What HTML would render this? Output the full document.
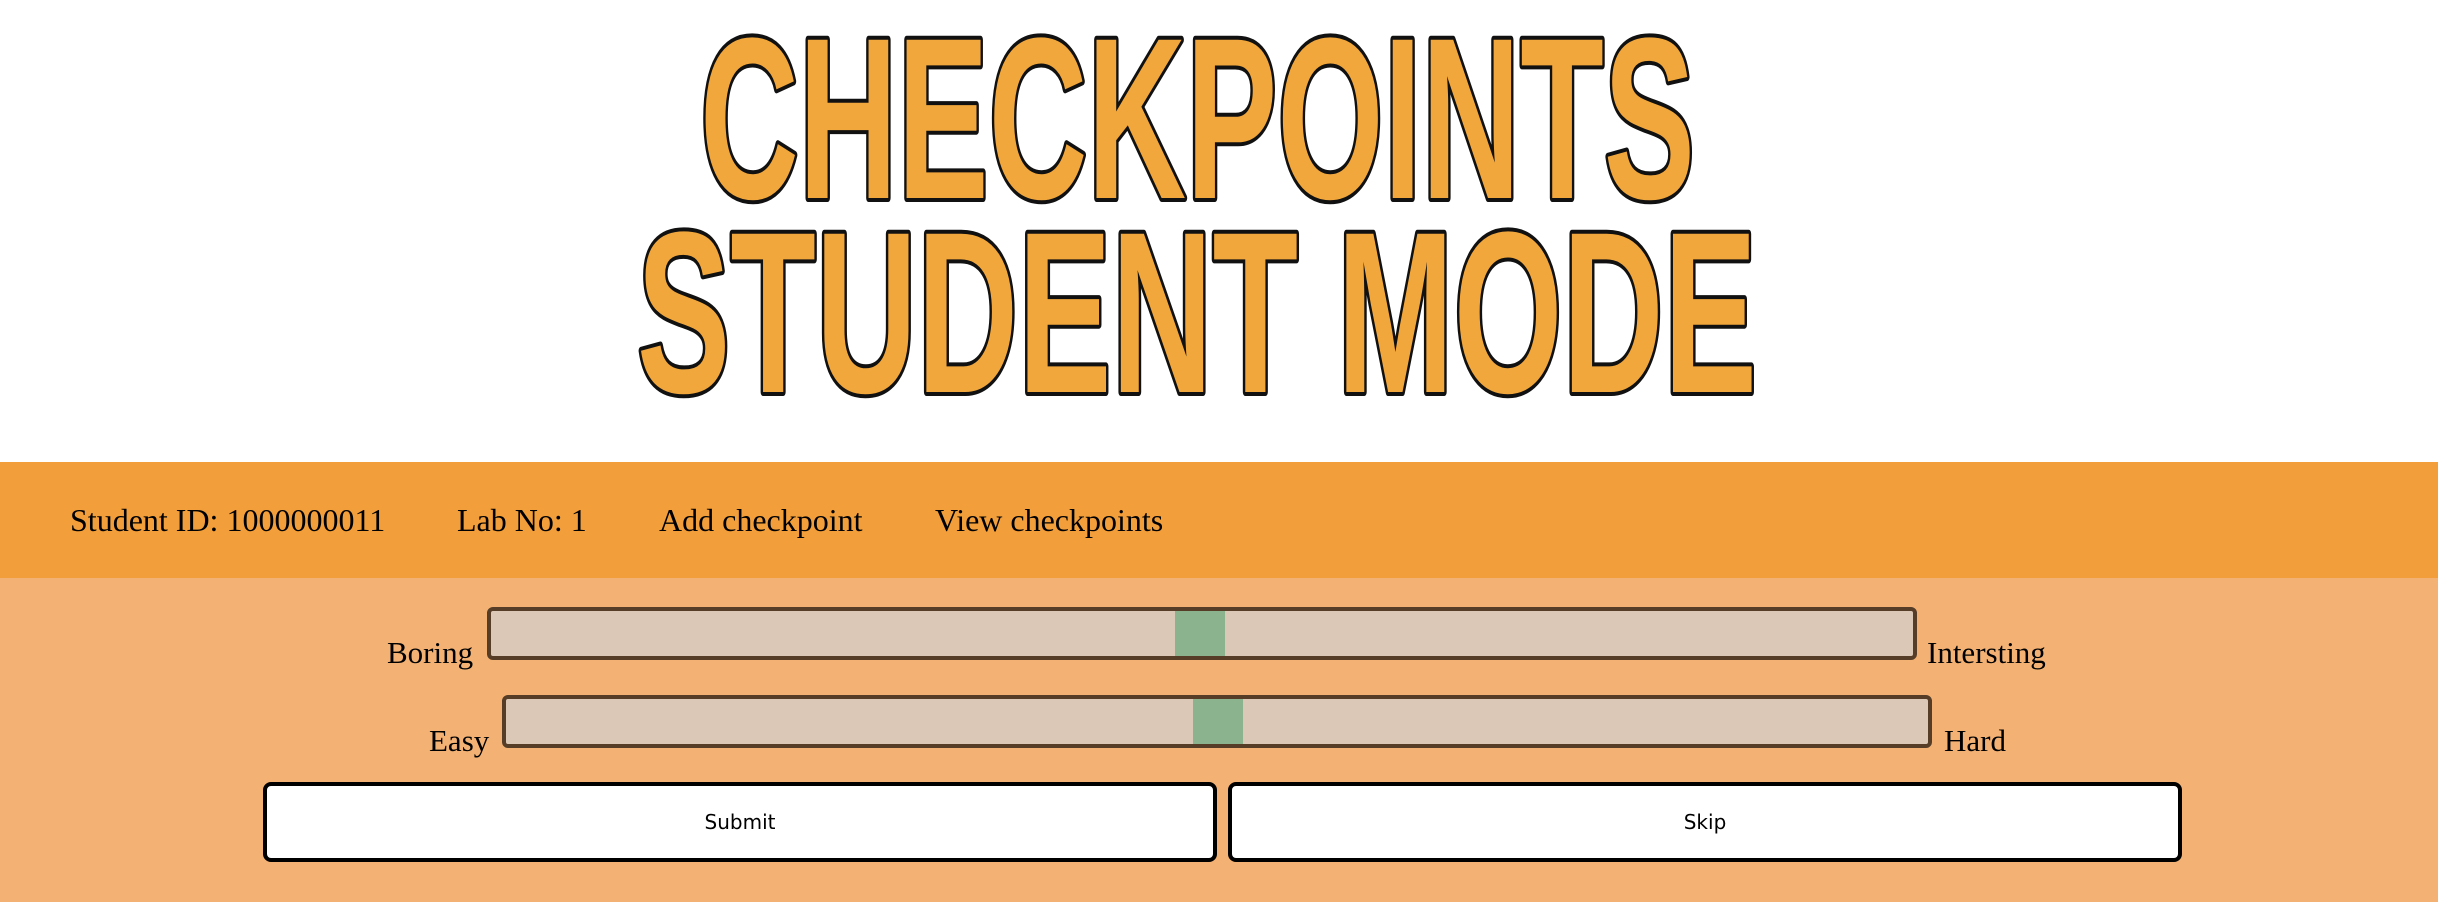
<!DOCTYPE html>
<html><head><meta charset="utf-8"><style>
*{margin:0;padding:0;box-sizing:border-box}
body{width:2438px;height:902px;background:#fff;position:relative;overflow:hidden;font-family:"Liberation Serif",serif;}
.nav{position:absolute;left:0;top:462px;width:2438px;height:116px;background:#f29e3b}
.nav span{position:absolute;top:40px;font-size:32px;color:#000;white-space:nowrap}
.main{position:absolute;left:0;top:578px;width:2438px;height:324px;background:#f3b274}
.sl{position:absolute;height:53px;background:#dcc8b6;border:4px solid #553d28;border-radius:6px}
.th{position:absolute;top:0;bottom:0;width:50px;background:#8bb38e}
.lb{position:absolute;font-size:31px;white-space:nowrap}
.btn{position:absolute;top:782px;height:80px;background:#fff;border:4px solid #000;border-radius:8px;font-family:"DejaVu Sans","Liberation Sans",sans-serif;font-size:20px;display:flex;align-items:center;justify-content:center}
</style></head><body>
<svg width="2438" height="420" style="position:absolute;left:0;top:0">
<g font-family="Liberation Sans Narrow, Liberation Sans, sans-serif" font-weight="bold" fill="#f2a73c" stroke="#111" stroke-width="8" paint-order="stroke" stroke-linejoin="round">
<text x="700" y="198" font-size="230" textLength="995" lengthAdjust="spacingAndGlyphs">CHECKPOINTS</text>
<text x="637" y="392" font-size="230" textLength="1120" lengthAdjust="spacingAndGlyphs">STUDENT MODE</text>
</g></svg>
<div class="nav">
<span style="left:70px">Student ID: 1000000011</span>
<span style="left:457px">Lab No: 1</span>
<span style="left:659px">Add checkpoint</span>
<span style="left:935px">View checkpoints</span>
</div>
<div class="main"></div>
<div class="sl" style="left:487px;top:607px;width:1430px"><div class="th" style="left:684px"></div></div>
<div class="lb" style="left:387px;top:635px">Boring</div>
<div class="lb" style="left:1927px;top:635px">Intersting</div>
<div class="sl" style="left:502px;top:695px;width:1430px"><div class="th" style="left:687px"></div></div>
<div class="lb" style="left:429px;top:723px">Easy</div>
<div class="lb" style="left:1944px;top:723px">Hard</div>
<div class="btn" style="left:263px;width:954px">Submit</div>
<div class="btn" style="left:1228px;width:954px">Skip</div>
</body></html>
